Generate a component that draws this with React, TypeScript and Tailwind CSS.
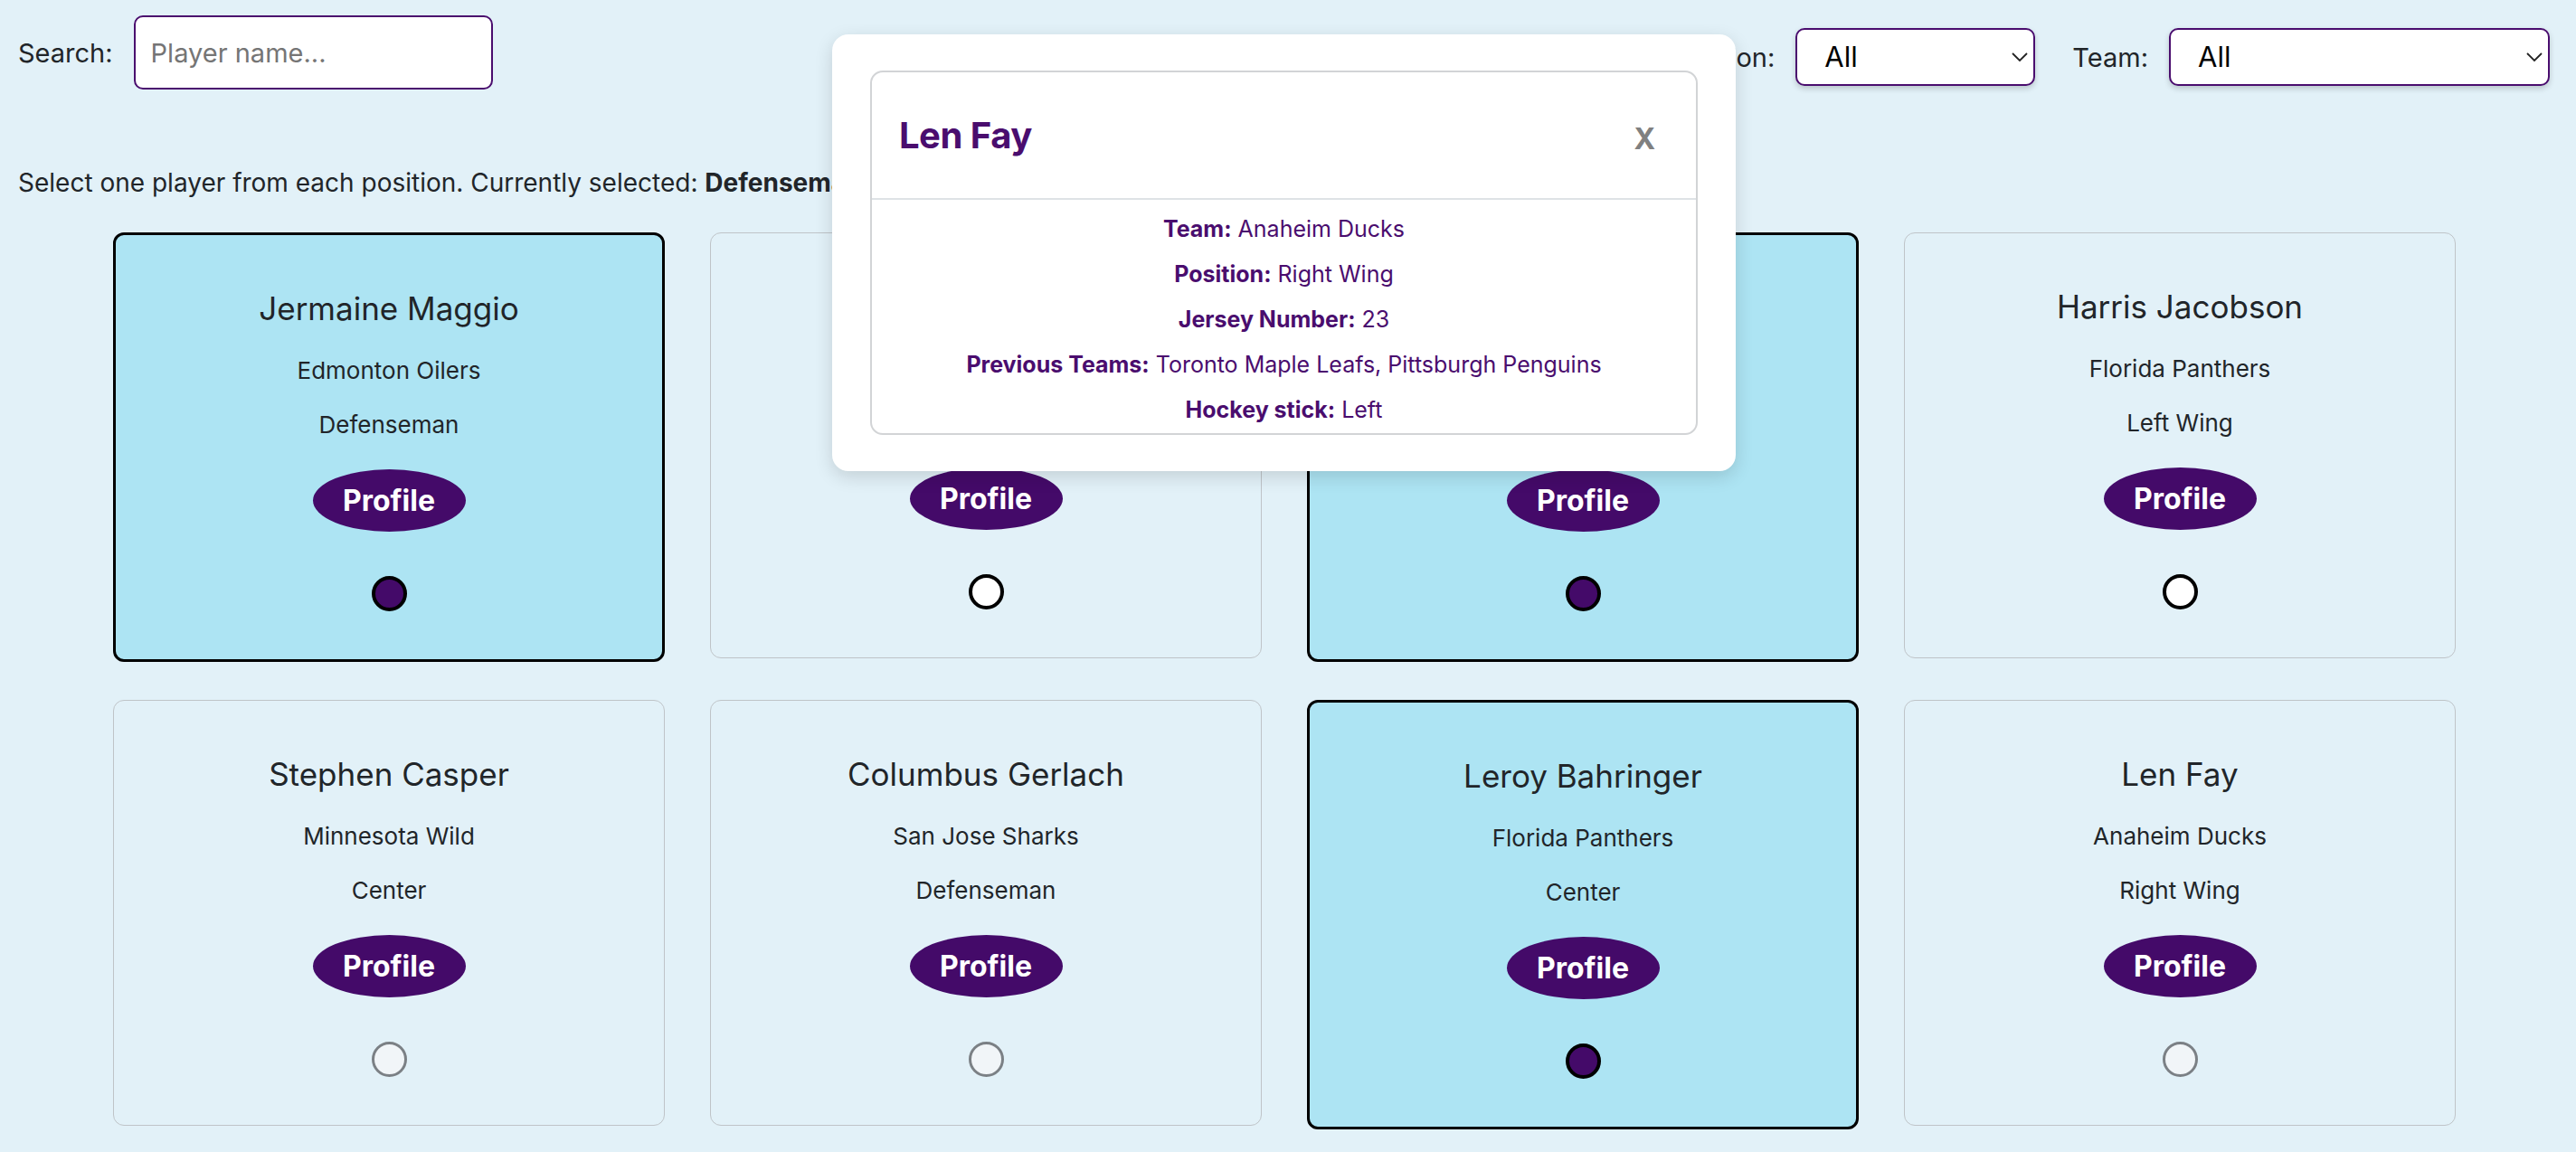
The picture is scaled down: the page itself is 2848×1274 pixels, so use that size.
import { useState } from "react";

type Player = {
  name: string;
  team: string;
  position: string;
  selected?: boolean;
  disabled?: boolean;
};

const players: Player[] = [
  { name: "Jermaine Maggio", team: "Edmonton Oilers", position: "Defenseman", selected: true },
  { name: "Ryan Hintz", team: "Boston Bruins", position: "Goalie" },
  { name: "Marcus Dietrich", team: "Vegas Golden Knights", position: "Right Wing", selected: true },
  { name: "Harris Jacobson", team: "Florida Panthers", position: "Left Wing" },
  { name: "Stephen Casper", team: "Minnesota Wild", position: "Center", disabled: true },
  { name: "Columbus Gerlach", team: "San Jose Sharks", position: "Defenseman", disabled: true },
  { name: "Leroy Bahringer", team: "Florida Panthers", position: "Center", selected: true },
  { name: "Len Fay", team: "Anaheim Ducks", position: "Right Wing", disabled: true },
];

const Chevron = () => (
  <svg
    className="pointer-events-none absolute right-[8px] top-1/2 -translate-y-1/2"
    width="18"
    height="10"
    viewBox="0 0 18 10"
    fill="none"
  >
    <polyline points="1,1 9,9 17,1" stroke="#222" strokeWidth="1.8" />
  </svg>
);

const FilterSelect = ({ label, width }: { label: string; width: string }) => (
  <div className="flex items-center gap-[23px]">
    <label className="text-[29px] leading-[35px] text-[#212529]">{label}</label>
    <div className={`relative ${width}`}>
      <select className="h-[64px] w-full appearance-none rounded-[10px] border-2 border-[#4a0d6e] bg-white pl-[30px] text-[31px] text-black shadow-[0_3px_6px_rgba(0,0,0,0.18)] outline-none">
        <option>All</option>
      </select>
      <Chevron />
    </div>
  </div>
);

const PlayerCard = ({ player }: { player: Player }) => {
  const cardStyle = player.selected
    ? "border-[3px] border-black bg-[#ade4f3]"
    : "border border-[#bfc4c8] bg-[#e2f1f8]";
  const radioStyle = player.selected
    ? "border-[4px] border-black bg-[#440a69]"
    : player.disabled
      ? "border-[3px] border-[#7b8085] bg-[#f1f5f8]"
      : "border-[4px] border-black bg-white";

  return (
    <div className={`flex flex-col items-center rounded-[12px] pt-[60px] pb-[53px] text-[#212529] ${cardStyle}`}>
      <h3 className="text-[35px] leading-[43px]">{player.name}</h3>
      <p className="mt-[27px] text-[26px] leading-[39px]">{player.team}</p>
      <p className="mt-[21px] text-[26px] leading-[39px]">{player.position}</p>
      <button className="mt-[30px] flex h-[69px] w-[169px] items-center justify-center rounded-[50%] bg-[#440a69] text-[32px] font-bold text-white">
        Profile
      </button>
      <span className={`mt-[49px] h-[39px] w-[39px] rounded-full ${radioStyle}`} />
    </div>
  );
};

const ProfilePopup = () => {
  const rows = [
    ["Team:", "Anaheim Ducks"],
    ["Position:", "Right Wing"],
    ["Jersey Number:", "23"],
    ["Previous Teams:", "Toronto Maple Leafs, Pittsburgh Penguins"],
    ["Hockey stick:", "Left"],
  ];
  return (
    <div className="absolute left-[920px] top-[38px] w-[999px] rounded-[18px] bg-white px-[42px] py-[40px] shadow-[0_6px_20px_rgba(0,0,0,0.14)]">
      <div className="rounded-[14px] border-2 border-[#d2d4d6]">
        <div className="flex h-[141px] items-center justify-between border-b-2 border-[#dee2e6] pl-[30px] pr-[45px]">
          <h4 className="text-[40px] font-bold leading-[50px] tracking-[-0.5px] text-[#4a0d6e]">Len Fay</h4>
          <span className="mt-[8px] text-[32px] font-bold leading-none text-[#808080]">X</span>
        </div>
        <div className="pt-[7px] pb-[1px] text-center text-[25px] leading-[50px] text-[#4a0d6e]">
          {rows.map(([k, v]) => (
            <p key={k}>
              <span className="font-bold">{k}</span> {v}
            </p>
          ))}
        </div>
      </div>
    </div>
  );
};

export default function App() {
  const [search, setSearch] = useState("");

  return (
    <div className="relative min-h-screen bg-[#e2f1f8] pb-[20px] font-['Inter','Noto_Sans',sans-serif]">
      {/* Filters */}
      <div className="flex items-start justify-between pl-[20px] pr-[29px]">
        <div className="mt-[17px] flex items-center gap-[23px]">
          <label className="text-[29px] leading-[35px] text-[#212529]">Search:</label>
          <input
            value={search}
            onChange={(e) => setSearch(e.target.value)}
            placeholder="Player name..."
            className="h-[82px] w-[397px] rounded-[10px] border-2 border-[#4a0d6e] bg-white pl-[17px] text-[29px] text-black outline-none placeholder:text-[#757575]"
          />
        </div>
        <div className="mt-[31px] flex items-center gap-[41px]">
          <FilterSelect label="Position:" width="w-[265px]" />
          <FilterSelect label="Team:" width="w-[421px]" />
        </div>
      </div>

      {/* the rest of this line sits under the popup */}
      <p className="mt-[86px] w-[920px] overflow-hidden whitespace-nowrap pl-[20px] text-[28px] leading-[34px] text-[#212529]">
        Select one player from each position. Currently selected: <b>Defenseman, Right Wing, Center</b>
      </p>

      {/* Player cards */}
      <div className="ml-[125px] mt-[38px] grid grid-cols-[repeat(4,610px)] items-start gap-x-[50px] gap-y-[42px] text-center">
        {players.map((p) => (
          <PlayerCard key={p.name} player={p} />
        ))}
      </div>

      <ProfilePopup />
    </div>
  );
}
